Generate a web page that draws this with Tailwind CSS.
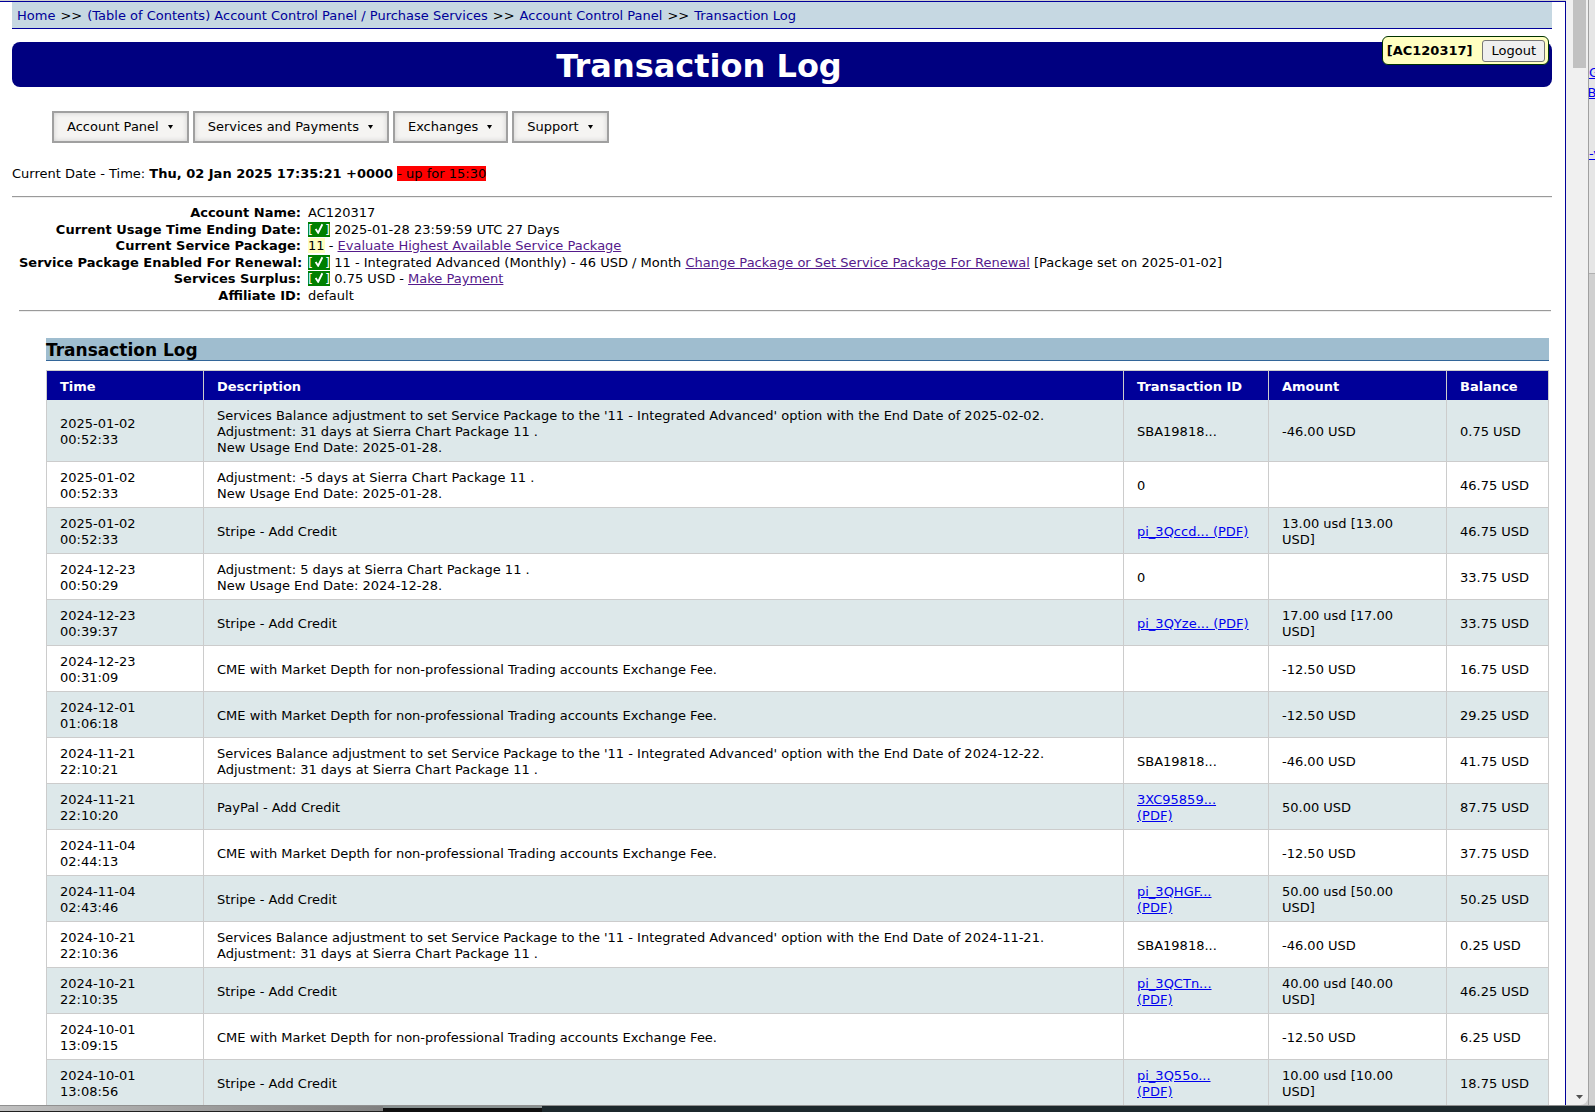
<!DOCTYPE html>
<html lang="en">
<head>
    <meta charset="UTF-8">
    <meta name="viewport" content="width=device-width,initial-scale=1.0">
    <title>Transaction Log</title>
    <script src="https://cdn.jsdelivr.net/npm/@tailwindcss/browser@4"></script>
</head>

<body class="h-screen overflow-hidden flex flex-col bg-[#d0d0d0] font-['DejaVu_Sans',Verdana,sans-serif] text-[13px] leading-4 text-black">
<!-- Tick used by the account summary -->
<svg class="hidden">
    <symbol id="tick" viewBox="0 0 12 13"><path d="M2 7l3 4.500L10 1.500" fill="none" stroke="#fff" stroke-width="2.200"/></symbol>
</svg>

<div class="flex flex-1 min-h-0">

    <!-- Page -->
    <main class="relative flex-1 min-w-0 overflow-hidden bg-white border-t border-r border-[#000099] mt-px pl-3 pr-[13px]">
        <nav class="bg-[#c6d8e2] border-b border-[#000099] h-[27px] px-[5px] pt-0.5 flex items-center gap-[5px] text-[#000099]">
            <a href="#">Home</a>
            <span class="text-black">&gt;&gt;</span>
            <a href="#">(Table of Contents) Account Control Panel / Purchase Services</a>
            <span class="text-black">&gt;&gt;</span>
            <a href="#">Account Control Panel</a>
            <span class="text-black">&gt;&gt;</span>
            <a href="#">Transaction Log</a>
        </nav>

        <header class="relative mt-[13px] h-[45px] rounded-lg bg-[#000080] pt-0.5 pr-[166px] flex items-center justify-center">
            <h1 class="text-[32px] leading-10 font-bold text-white">Transaction Log</h1>
            <div class="absolute right-[3px] -top-1.5 h-[29px] flex items-center gap-2.5 rounded-md border border-[#003300] bg-[#ffffc0] pt-px pl-1 pr-[3px]">
                <b>[AC120317]</b>
                <button type="button" class="h-[22px] px-2 rounded-[3px] border border-[#767676] bg-[#efefef]">Logout</button>
            </div>
        </header>

        <!-- Menu -->
        <div class="mt-6 pl-10 flex gap-1">
            <button type="button" class="h-8 px-[13px] flex items-center gap-2 border-2 border-[#a0a0a0] bg-[#f5f4f2] shadow-[inset_0_0_5px_#cccccc]">Account Panel
                <svg class="w-[7px] h-1" viewBox="0 0 7 4"><path d="M1 0h5L3.500 4z"/></svg></button>
            <button type="button" class="h-8 px-[13px] flex items-center gap-2 border-2 border-[#a0a0a0] bg-[#f5f4f2] shadow-[inset_0_0_5px_#cccccc]">Services and Payments
                <svg class="w-[7px] h-1" viewBox="0 0 7 4"><path d="M1 0h5L3.500 4z"/></svg></button>
            <button type="button" class="h-8 px-[13px] flex items-center gap-2 border-2 border-[#a0a0a0] bg-[#f5f4f2] shadow-[inset_0_0_5px_#cccccc]">Exchanges
                <svg class="w-[7px] h-1" viewBox="0 0 7 4"><path d="M1 0h5L3.500 4z"/></svg></button>
            <button type="button" class="h-8 px-[13px] flex items-center gap-2 border-2 border-[#a0a0a0] bg-[#f5f4f2] shadow-[inset_0_0_5px_#cccccc]">Support
                <svg class="w-[7px] h-1" viewBox="0 0 7 4"><path d="M1 0h5L3.500 4z"/></svg></button>
        </div>

        <p class="mt-[23px]">Current Date - Time: <b>Thu, 02 Jan 2025 17:35:21 +0000</b> <span class="bg-[#ff0000]">- up for 15:30</span></p>
        <hr class="mt-3.5 h-0.5 border-t border-b border-t-[#9a9a9a] border-b-[#eeeeee]">

        <!-- Account summary -->
        <dl class="mt-[7px] ml-[7px] grid grid-cols-[282px_1fr] gap-x-[7px] auto-rows-[16px_17px] items-center">
            <dt class="text-right font-bold whitespace-nowrap">Account Name:</dt>
            <dd>AC120317</dd>
            <dt class="text-right font-bold whitespace-nowrap">Current Usage Time Ending Date:</dt>
            <dd><span class="bg-[#008000] text-white">[<svg class="inline-block align-baseline w-3 h-[11px]"><use href="#tick"/></svg>]</span> 2025-01-28 23:59:59 UTC 27 Days</dd>
            <dt class="text-right font-bold whitespace-nowrap">Current Service Package:</dt>
            <dd><span class="bg-[#ffffc0]">11</span> - <a href="#" class="text-[#551a8b] underline">Evaluate Highest Available Service Package</a></dd>
            <dt class="text-right font-bold whitespace-nowrap">Service Package Enabled For Renewal:</dt>
            <dd><span class="bg-[#008000] text-white">[<svg class="inline-block align-baseline w-3 h-[11px]"><use href="#tick"/></svg>]</span> 11 - Integrated Advanced (Monthly) - 46 USD / Month <a href="#" class="text-[#551a8b] underline">Change Package or Set Service Package For Renewal</a> [Package set on 2025-01-02]</dd>
            <dt class="text-right font-bold whitespace-nowrap">Services Surplus:</dt>
            <dd><span class="bg-[#008000] text-white">[<svg class="inline-block align-baseline w-3 h-[11px]"><use href="#tick"/></svg>]</span> 0.75 USD - <a href="#" class="text-[#551a8b] underline">Make Payment</a></dd>
            <dt class="text-right font-bold whitespace-nowrap">Affiliate ID:</dt>
            <dd>default</dd>
        </dl>
        <hr class="mt-1.5 ml-[7px] mr-px h-0.5 border-t border-b border-t-[#9a9a9a] border-b-[#eeeeee]">

        <!-- Transactions -->
        <section class="mt-[26px] ml-[34px] mr-[3px]">
            <h2 class="h-[23px] border-b border-[#336699] bg-[#9fbdcf] text-[17px] leading-6 font-bold">Transaction Log</h2>
            <table class="mt-[9px] w-full table-fixed border-collapse border border-[#cccccc]
                [&_th]:border-x [&_th]:border-[#cccccc] [&_th]:px-[13px] [&_th]:pt-2 [&_th]:pb-[5px] [&_th]:text-left
                [&_td]:border-x [&_td]:border-b [&_td]:border-[#cccccc] [&_td]:px-[13px] [&_td]:pt-2 [&_td]:pb-[5px]
                [&_td_a]:text-[#0000ee] [&_td_a]:underline [&_tbody_tr:nth-child(odd)]:bg-[#dde8ea]">
                <thead class="bg-[#000099] text-white">
                <tr>
                    <th class="w-[157px]">Time</th>
                    <th>Description</th>
                    <th class="w-[145px]">Transaction ID</th>
                    <th class="w-[178px]">Amount</th>
                    <th class="w-[102px]">Balance</th>
                </tr>
                </thead>
                <tbody>
                <tr>
                    <td>2025-01-02<br>00:52:33</td>
                    <td>Services Balance adjustment to set Service Package to the '11 - Integrated Advanced' option with the End Date of 2025-02-02.<br>Adjustment: 31 days at Sierra Chart Package 11 .<br>New Usage End Date: 2025-01-28.</td>
                    <td>SBA19818...</td>
                    <td>-46.00 USD</td>
                    <td>0.75 USD</td>
                </tr>
                <tr>
                    <td>2025-01-02<br>00:52:33</td>
                    <td>Adjustment: -5 days at Sierra Chart Package 11 .<br>New Usage End Date: 2025-01-28.</td>
                    <td>0</td>
                    <td></td>
                    <td>46.75 USD</td>
                </tr>
                <tr>
                    <td>2025-01-02<br>00:52:33</td>
                    <td>Stripe - Add Credit</td>
                    <td class="whitespace-nowrap"><a href="#">pi_3Qccd... (PDF)</a></td>
                    <td>13.00 usd [13.00<br>USD]</td>
                    <td>46.75 USD</td>
                </tr>
                <tr>
                    <td>2024-12-23<br>00:50:29</td>
                    <td>Adjustment: 5 days at Sierra Chart Package 11 .<br>New Usage End Date: 2024-12-28.</td>
                    <td>0</td>
                    <td></td>
                    <td>33.75 USD</td>
                </tr>
                <tr>
                    <td>2024-12-23<br>00:39:37</td>
                    <td>Stripe - Add Credit</td>
                    <td class="whitespace-nowrap"><a href="#">pi_3QYze... (PDF)</a></td>
                    <td>17.00 usd [17.00<br>USD]</td>
                    <td>33.75 USD</td>
                </tr>
                <tr>
                    <td>2024-12-23<br>00:31:09</td>
                    <td>CME with Market Depth for non-professional Trading accounts Exchange Fee.</td>
                    <td></td>
                    <td>-12.50 USD</td>
                    <td>16.75 USD</td>
                </tr>
                <tr>
                    <td>2024-12-01<br>01:06:18</td>
                    <td>CME with Market Depth for non-professional Trading accounts Exchange Fee.</td>
                    <td></td>
                    <td>-12.50 USD</td>
                    <td>29.25 USD</td>
                </tr>
                <tr>
                    <td>2024-11-21<br>22:10:21</td>
                    <td>Services Balance adjustment to set Service Package to the '11 - Integrated Advanced' option with the End Date of 2024-12-22.<br>Adjustment: 31 days at Sierra Chart Package 11 .</td>
                    <td>SBA19818...</td>
                    <td>-46.00 USD</td>
                    <td>41.75 USD</td>
                </tr>
                <tr>
                    <td>2024-11-21<br>22:10:20</td>
                    <td>PayPal - Add Credit</td>
                    <td><a href="#">3XC95859...<br>(PDF)</a></td>
                    <td>50.00 USD</td>
                    <td>87.75 USD</td>
                </tr>
                <tr>
                    <td>2024-11-04<br>02:44:13</td>
                    <td>CME with Market Depth for non-professional Trading accounts Exchange Fee.</td>
                    <td></td>
                    <td>-12.50 USD</td>
                    <td>37.75 USD</td>
                </tr>
                <tr>
                    <td>2024-11-04<br>02:43:46</td>
                    <td>Stripe - Add Credit</td>
                    <td><a href="#">pi_3QHGF...<br>(PDF)</a></td>
                    <td>50.00 usd [50.00<br>USD]</td>
                    <td>50.25 USD</td>
                </tr>
                <tr>
                    <td>2024-10-21<br>22:10:36</td>
                    <td>Services Balance adjustment to set Service Package to the '11 - Integrated Advanced' option with the End Date of 2024-11-21.<br>Adjustment: 31 days at Sierra Chart Package 11 .</td>
                    <td>SBA19818...</td>
                    <td>-46.00 USD</td>
                    <td>0.25 USD</td>
                </tr>
                <tr>
                    <td>2024-10-21<br>22:10:35</td>
                    <td>Stripe - Add Credit</td>
                    <td><a href="#">pi_3QCTn...<br>(PDF)</a></td>
                    <td>40.00 usd [40.00<br>USD]</td>
                    <td>46.25 USD</td>
                </tr>
                <tr>
                    <td>2024-10-01<br>13:09:15</td>
                    <td>CME with Market Depth for non-professional Trading accounts Exchange Fee.</td>
                    <td></td>
                    <td>-12.50 USD</td>
                    <td>6.25 USD</td>
                </tr>
                <tr>
                    <td>2024-10-01<br>13:08:56</td>
                    <td>Stripe - Add Credit</td>
                    <td><a href="#">pi_3Q55o...<br>(PDF)</a></td>
                    <td>10.00 usd [10.00<br>USD]</td>
                    <td>18.75 USD</td>
                </tr>
                </tbody>
            </table>
        </section>
    </main>

    <!-- Scrollbar -->
    <div class="w-[22px] shrink-0 pl-[7px] pr-0.5 pb-1.5 flex flex-col items-center justify-between bg-[#f0f0f0] rounded-br-lg">
        <div class="w-full h-[68px] bg-[#c1c1c1]"></div>
        <svg class="w-[7px] h-1" viewBox="0 0 7 4"><path d="M0 0h7L3.500 4z" fill="#505050"/></svg>
    </div>

    <!-- Edge of the window behind -->
    <div class="w-[7px] shrink-0 overflow-hidden border-l border-[#a0a0a0]">
        <div class="h-[274px] pt-[65px] flex flex-col items-start bg-[#e6e6e6] border-b border-[#b0b0b0] text-[#0000ee] underline whitespace-nowrap">
            <a href="#" class="h-5">G</a>
            <a href="#" class="h-[61px] self-center">B</a>
            <a href="#">-v</a>
        </div>
    </div>
</div>

<!-- Desktop strip -->
<footer class="h-[7px] shrink-0 flex border-t border-[#909090]">
    <div class="w-[24%] bg-linear-to-r from-[#c0c0c0] to-[#808080] border-b border-[#202020]"></div>
    <div class="w-[10%] bg-[#101010] border-t-2 border-[#889090]"></div>
    <div class="flex-1 bg-[#1c282c]"></div>
</footer>
</body>
</html>
